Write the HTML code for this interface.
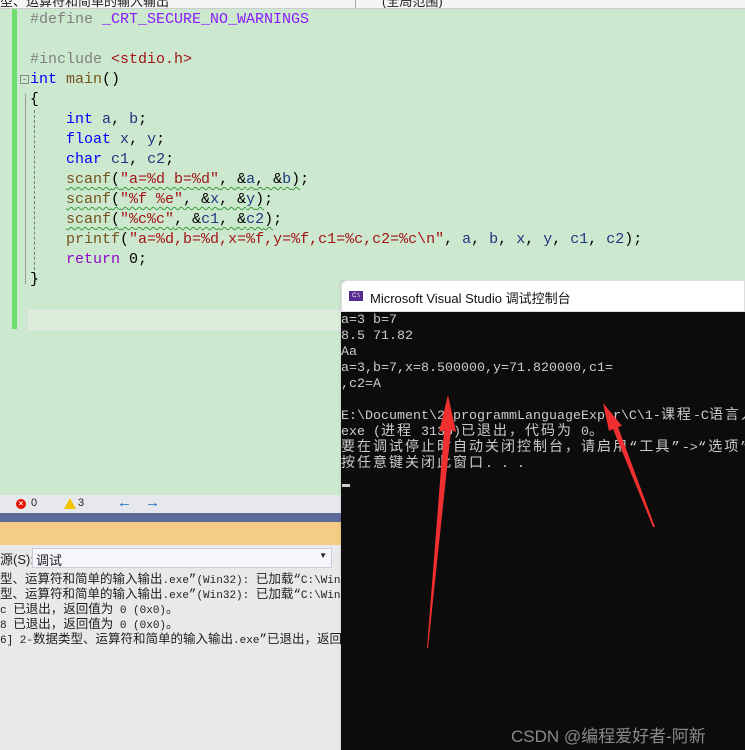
<!DOCTYPE html>
<html><head><meta charset="utf-8"><style>
*{margin:0;padding:0;box-sizing:border-box}
body{width:745px;height:750px;overflow:hidden;position:relative;background:#e8e9eb;font-family:"Liberation Sans","Noto Sans CJK SC",sans-serif}
.abs{position:absolute}
.code{font-family:"Liberation Mono","Noto Sans CJK SC",monospace;font-size:15px;line-height:20px;white-space:pre;color:#000}
.kw{color:#0000ff}.pp{color:#808080}.mac{color:#8a1bff}.str{color:#a31515}.fn{color:#74531f}.var{color:#1f377f}.ret{color:#8f08c4}
.sq{text-decoration:underline wavy #3a9a3a;text-decoration-thickness:1px;text-underline-offset:3px}
.con{font-family:"Liberation Mono","Noto Sans CJK SC",monospace;font-size:13.33px;line-height:16px;white-space:pre;color:#cccccc}
.con c{font-size:14px;letter-spacing:2px;line-height:0}
.out{font-family:"Liberation Mono","Noto Sans CJK SC",monospace;font-size:11px;line-height:15px;white-space:pre;color:#1e1e1e}
.out c{font-size:12.5px;line-height:0}
</style></head><body>
<div class="abs" style="left:0;top:0;width:745px;height:9px;background:#f5f5f5;border-bottom:1px solid #ccc;overflow:hidden">
 <div class="abs" style="left:0;top:-9px;font-size:13px;color:#222">型、运算符和简单的输入输出</div>
 <div class="abs" style="left:355px;top:0;width:1px;height:9px;background:#aaa"></div>
 <div class="abs" style="left:382px;top:-9px;font-size:13px;color:#222">(全局范围)</div>
</div>
<div class="abs" style="left:0;top:9px;width:745px;height:486px;background:#cce8cf"></div>
<div class="abs" style="left:12px;top:9px;width:5px;height:320px;background:#6fdc6f"></div>
<div class="abs" style="left:28px;top:310px;width:320px;height:20px;background:#d9edd9;border:2px solid #e4e8e4"></div>
<div class="abs" style="left:20px;top:75px;width:9px;height:9px;border:1px solid #888;font-size:9px;line-height:7px;text-align:center;color:#555">-</div>
<div class="abs" style="left:25px;top:94px;width:0;height:190px;border-left:1px solid #999"></div>
<div class="abs" style="left:34px;top:110px;width:0;height:170px;border-left:1px dashed #777"></div>
<div class="abs code" style="left:30px;top:10px"><span class="pp">#define </span><span class="mac">_CRT_SECURE_NO_WARNINGS</span>

<span class="pp">#include </span><span class="str">&lt;stdio.h&gt;</span>
<span class="kw">int</span> <span class="fn">main</span>()
{
    <span class="kw">int</span> <span class="var">a</span>, <span class="var">b</span>;
    <span class="kw">float</span> <span class="var">x</span>, <span class="var">y</span>;
    <span class="kw">char</span> <span class="var">c1</span>, <span class="var">c2</span>;
    <span class="sq"><span class="fn">scanf</span>(<span class="str">"a=%d b=%d"</span>, &amp;<span class="var">a</span>, &amp;<span class="var">b</span>)</span>;
    <span class="sq"><span class="fn">scanf</span>(<span class="str">"%f %e"</span>, &amp;<span class="var">x</span>, &amp;<span class="var">y</span>)</span>;
    <span class="sq"><span class="fn">scanf</span>(<span class="str">"%c%c"</span>, &amp;<span class="var">c1</span>, &amp;<span class="var">c2</span>)</span>;
    <span class="fn">printf</span>(<span class="str">"a=%d,b=%d,x=%f,y=%f,c1=%c,c2=%c\n"</span>, <span class="var">a</span>, <span class="var">b</span>, <span class="var">x</span>, <span class="var">y</span>, <span class="var">c1</span>, <span class="var">c2</span>);
    <span class="ret">return</span> 0;
}</div>
<div class="abs" style="left:0;top:495px;width:745px;height:18px;background:#e7e8ec"></div>
<div class="abs" style="left:16px;top:499px;width:10px;height:10px;border-radius:50%;background:#e51400;color:#fff;font-size:8px;line-height:10px;text-align:center;font-weight:bold">×</div>
<div class="abs" style="left:31px;top:497px;font-size:11px;color:#222">0</div>
<div class="abs" style="left:64px;top:498px;width:0;height:0;border-left:6px solid transparent;border-right:6px solid transparent;border-bottom:11px solid #f2c400"></div>
<div class="abs" style="left:78px;top:497px;font-size:11px;color:#222">3</div>
<div class="abs" style="left:117px;top:494px;font-size:15px;color:#1b6ac9">←</div>
<div class="abs" style="left:145px;top:494px;font-size:15px;color:#1b6ac9">→</div>
<div class="abs" style="left:0;top:513px;width:745px;height:9px;background:#5d6b99"></div>
<div class="abs" style="left:0;top:522px;width:745px;height:23px;background:#f5cc84"></div>
<div class="abs" style="left:0;top:545px;width:745px;height:26px;background:#e8e9eb"></div>
<div class="abs" style="left:0;top:549px;font-size:13px;color:#222">源(S):</div>
<div class="abs" style="left:32px;top:548px;width:300px;height:20px;background:#f4f6fb;border:1px solid #ccd;font-size:13px;padding:1px 3px;color:#222">调试<span style="position:absolute;right:4px;top:2px;font-size:8px">▼</span></div>
<div class="abs out" style="left:0;top:574px"><c>型、运算符和简单的输入输出</c>.exe<c>”</c>(Win32): <c>已加载“</c>C:\Windo
<c>型、运算符和简单的输入输出</c>.exe<c>”</c>(Win32): <c>已加载“</c>C:\Windo
c <c>已退出，返回值为</c> 0 (0x0)<c>。</c>
8 <c>已退出，返回值为</c> 0 (0x0)<c>。</c>
6] 2-<c>数据类型、运算符和简单的输入输出</c>.exe<c>”已退出，返回值</c></div>
<div class="abs" style="left:338px;top:280px;width:8px;height:470px;background:linear-gradient(to right,rgba(0,0,0,0),rgba(0,0,0,0.12))"></div>
<div class="abs" style="left:341px;top:280px;width:404px;height:32px;background:#fff;border-top-left-radius:6px;border:1px solid #ddd"></div>
<div class="abs" style="left:349px;top:291px;width:14px;height:10px;background:#5c2d91;color:#fff;font-size:6px;line-height:10px;text-align:center">C:\</div>
<div class="abs" style="left:370px;top:288px;font-size:13px;color:#111">Microsoft Visual Studio 调试控制台</div>
<div class="abs" style="left:341px;top:312px;width:404px;height:438px;background:#0c0c0c;overflow:hidden">
<div class="abs con" style="left:0;top:1px">a=3 b=7
8.5 71.82
Aa
a=3,b=7,x=8.500000,y=71.820000,c1=
,c2=A

E:\Document\2-programmLanguageExper\C\1-<c>课程</c>-C<c>语言入门</c>
exe (<c>进程</c> 3136)<c>已退出，代码为</c> 0<c>。</c>
<c>要在调试停止时自动关闭控制台，请启用“工具”</c>-&gt;<c>“选项”</c>
<c>按任意键关闭此窗口</c>. . .</div>
<div class="abs" style="left:1px;top:172px;width:8px;height:3px;background:#ccc"></div>
<div class="abs" style="left:170px;top:410px;font-size:17px;color:#8a8a8a;white-space:nowrap">CSDN @编程爱好者-阿新</div>
</div>
<svg class="abs" style="left:0;top:0" width="745" height="750">
<polygon points="448,395 456,432 451,430 428,648 427,648 444,430 439,432" fill="#f03030"/>
<polygon points="603,403 622,426 618,427 655,527 653,527 613,429 609,431" fill="#f03030"/>
</svg>
</body></html>
